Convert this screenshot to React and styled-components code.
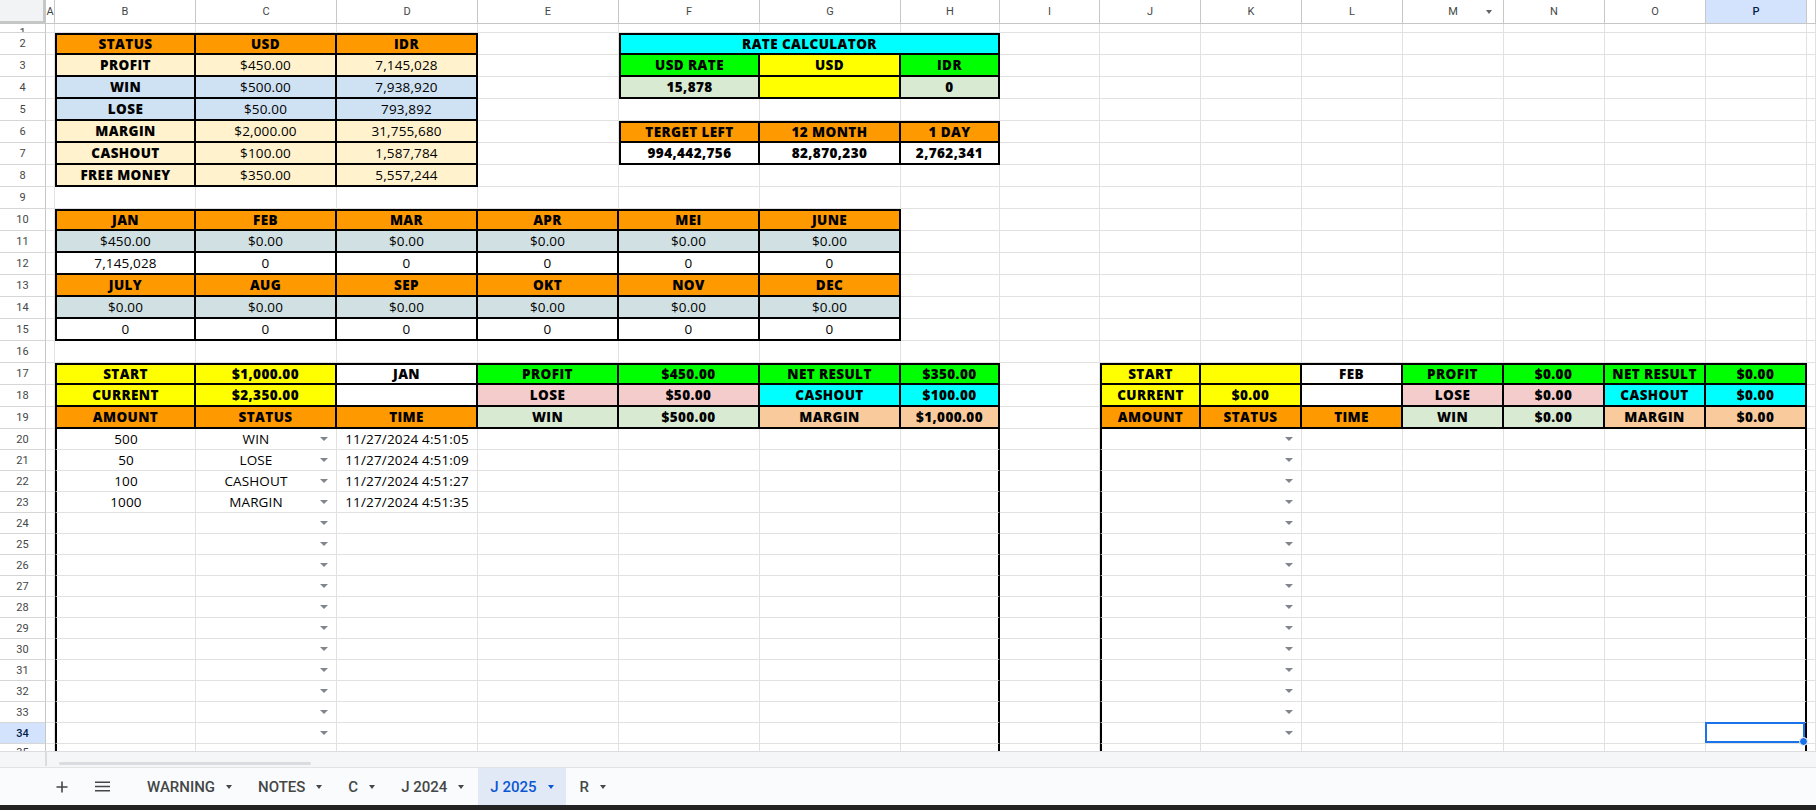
import React from 'react';
import styled, { createGlobalStyle } from 'styled-components';

const GlobalStyle = createGlobalStyle`
  html, body { margin: 0; padding: 0; background: #ffffff; overflow: hidden; }
  *, *::before, *::after { box-sizing: border-box; }
`;

const COLORS = {
  orange: '#ff9900',
  cream: '#fff2cc',
  blue: '#cfe2f3',
  cyan: '#00ffff',
  green: '#00ff00',
  yellow: '#ffff00',
  mint: '#d9ead3',
  slate: '#d0e0e3',
  pink: '#f4cccc',
  peach: '#f9cb9c',
  white: '#ffffff',
};

const COLS = ['A', 'B', 'C', 'D', 'E', 'F', 'G', 'H', 'I', 'J', 'K', 'L', 'M', 'N', 'O', 'P', 'Q'];
const ROWS = Array.from({ length: 35 }, (_, i) => i + 1);
const ci = (l) => COLS.indexOf(l);

/* ---------- sheet data ---------- */
const cells = {};
const put = (ref, v, bg, bold, extra = {}) => {
  cells[ref] = { v, bg, bold, ...extra };
};
const row = (r, startCol, values, bg, bold) => {
  values.forEach((v, i) => put(`${COLS[ci(startCol) + i]}${r}`, v, bg, bold));
};

// status table
row(2, 'B', ['STATUS', 'USD', 'IDR'], COLORS.orange, true);
put('B3', 'PROFIT', COLORS.cream, true); row(3, 'C', ['$450.00', '7,145,028'], COLORS.cream, false);
put('B4', 'WIN', COLORS.blue, true); row(4, 'C', ['$500.00', '7,938,920'], COLORS.blue, false);
put('B5', 'LOSE', COLORS.blue, true); row(5, 'C', ['$50.00', '793,892'], COLORS.blue, false);
put('B6', 'MARGIN', COLORS.cream, true); row(6, 'C', ['$2,000.00', '31,755,680'], COLORS.cream, false);
put('B7', 'CASHOUT', COLORS.cream, true); row(7, 'C', ['$100.00', '1,587,784'], COLORS.cream, false);
put('B8', 'FREE MONEY', COLORS.cream, true); row(8, 'C', ['$350.00', '5,557,244'], COLORS.cream, false);

// rate calculator
put('F2', 'RATE CALCULATOR', COLORS.cyan, true, { span: 3 });
put('F3', 'USD RATE', COLORS.green, true);
put('G3', 'USD', COLORS.yellow, true);
put('H3', 'IDR', COLORS.green, true);
put('F4', '15,878', COLORS.mint, true);
put('G4', '', COLORS.yellow, true);
put('H4', '0', COLORS.mint, true);
row(6, 'F', ['TERGET LEFT', '12 MONTH', '1 DAY'], COLORS.orange, true);
row(7, 'F', ['994,442,756', '82,870,230', '2,762,341'], COLORS.white, true);

// months
row(10, 'B', ['JAN', 'FEB', 'MAR', 'APR', 'MEI', 'JUNE'], COLORS.orange, true);
row(11, 'B', ['$450.00', '$0.00', '$0.00', '$0.00', '$0.00', '$0.00'], COLORS.slate, false);
row(12, 'B', ['7,145,028', '0', '0', '0', '0', '0'], COLORS.white, false);
row(13, 'B', ['JULY', 'AUG', 'SEP', 'OKT', 'NOV', 'DEC'], COLORS.orange, true);
row(14, 'B', ['$0.00', '$0.00', '$0.00', '$0.00', '$0.00', '$0.00'], COLORS.slate, false);
row(15, 'B', ['0', '0', '0', '0', '0', '0'], COLORS.white, false);

// journal JAN
row(17, 'B', ['START', '$1,000.00'], COLORS.yellow, true);
put('D17', 'JAN', COLORS.white, true);
row(17, 'E', ['PROFIT', '$450.00', 'NET RESULT', '$350.00'], COLORS.green, true);
row(18, 'B', ['CURRENT', '$2,350.00'], COLORS.yellow, true);
put('D18', '', COLORS.white, true);
row(18, 'E', ['LOSE', '$50.00'], COLORS.pink, true);
row(18, 'G', ['CASHOUT', '$100.00'], COLORS.cyan, true);
row(19, 'B', ['AMOUNT', 'STATUS', 'TIME'], COLORS.orange, true);
row(19, 'E', ['WIN', '$500.00'], COLORS.mint, true);
row(19, 'G', ['MARGIN', '$1,000.00'], COLORS.peach, true);

// journal FEB
row(17, 'J', ['START', ''], COLORS.yellow, true);
put('L17', 'FEB', COLORS.white, true);
row(17, 'M', ['PROFIT', '$0.00', 'NET RESULT', '$0.00'], COLORS.green, true);
row(18, 'J', ['CURRENT', '$0.00'], COLORS.yellow, true);
put('L18', '', COLORS.white, true);
row(18, 'M', ['LOSE', '$0.00'], COLORS.pink, true);
row(18, 'O', ['CASHOUT', '$0.00'], COLORS.cyan, true);
row(19, 'J', ['AMOUNT', 'STATUS', 'TIME'], COLORS.orange, true);
row(19, 'M', ['WIN', '$0.00'], COLORS.mint, true);
row(19, 'O', ['MARGIN', '$0.00'], COLORS.peach, true);

// journal entries
const entries = [
  ['500', 'WIN', '11/27/2024 4:51:05'],
  ['50', 'LOSE', '11/27/2024 4:51:09'],
  ['100', 'CASHOUT', '11/27/2024 4:51:27'],
  ['1000', 'MARGIN', '11/27/2024 4:51:35'],
];
for (let r = 20; r <= 35; r += 1) {
  const e = entries[r - 20];
  put(`B${r}`, e ? e[0] : '', null, false, { l: true });
  put(`C${r}`, e ? e[1] : '', null, false, { dd: true });
  put(`D${r}`, e ? e[2] : '', null, false);
  put(`H${r}`, '', null, false, { r: true });
  put(`J${r}`, '', null, false, { l: true });
  put(`K${r}`, '', null, false, { dd: true });
  put(`P${r}`, '', null, false, { r: true, selected: r === 34 });
}

// thick bordered blocks
const covered = new Set();
Object.entries(cells).forEach(([ref, c]) => {
  if (c.span > 1) {
    const col = ref.match(/[A-Z]+/)[0];
    const r = ref.match(/\d+/)[0];
    for (let k = 1; k < c.span; k += 1) covered.add(`${COLS[ci(col) + k]}${r}`);
  }
});
[['B', 2, 'D', 8], ['F', 2, 'H', 4], ['F', 6, 'H', 7], ['B', 10, 'G', 15], ['B', 17, 'H', 19], ['J', 17, 'P', 19]]
  .forEach(([c1, r1, c2, r2]) => {
    for (let r = r1; r <= r2; r += 1) {
      for (let c = ci(c1); c <= ci(c2); c += 1) {
        const ref = `${COLS[c]}${r}`;
        if (covered.has(ref)) continue;
        const cell = cells[ref] || (cells[ref] = { v: '' });
        cell.t = r === r1;
        cell.l = c === ci(c1);
        cell.r = true;
        cell.b = true;
      }
    }
  });

/* ---------- styled parts ---------- */
const Page = styled.div`
  width: 1816px;
  height: 810px;
  display: flex;
  flex-direction: column;
  overflow: hidden;
  background: #ffffff;
`;

const Sheet = styled.div`
  height: 751px;
  flex: none;
  overflow: hidden;
  display: grid;
  grid-template-columns: 46px 9px repeat(6, 141px) 99px 100px repeat(7, 101px) 1fr;
  grid-template-rows: 24px 9px repeat(18, 22px) repeat(16, 21px);
  align-content: start;
`;

const Corner = styled.div`
  background: #f1f3f4;
  border-right: 3px solid #c4c7c5;
  border-bottom: 3px solid #c4c7c5;
`;

const ColHeader = styled.div`
  display: grid;
  grid-template-columns: 1fr auto 1fr;
  align-items: center;
  background: ${(p) => (p.$active ? '#d3e3fd' : '#ffffff')};
  border-right: 1px solid #c7c7c7;
  border-bottom: 1px solid #c4c7c5;
  font-family: Roboto, 'Liberation Sans', sans-serif;
  font-size: 11px;
  font-weight: ${(p) => (p.$active ? 500 : 400)};
  color: ${(p) => (p.$active ? '#041e49' : '#444746')};
  overflow: hidden;
`;

const HeaderLetter = styled.span`
  grid-column: 2;
`;

const HeaderMenu = styled.span`
  grid-column: 3;
  justify-self: end;
  margin-right: 11px;
  width: 0;
  height: 0;
  border-left: 3.5px solid transparent;
  border-right: 3.5px solid transparent;
  border-top: 4px solid #5f6368;
`;

const RowHeader = styled.div`
  display: flex;
  justify-content: center;
  align-items: ${(p) => (p.$short ? 'flex-start' : 'center')};
  padding-top: ${(p) => (p.$short ? '3px' : '0')};
  line-height: 11px;
  overflow: hidden;
  background: ${(p) => (p.$active ? '#d3e3fd' : '#ffffff')};
  border-right: 1px solid #c4c7c5;
  border-bottom: 1px solid #d6d6d6;
  font-family: Roboto, 'Liberation Sans', sans-serif;
  font-size: 11px;
  font-weight: ${(p) => (p.$active ? 500 : 400)};
  color: ${(p) => (p.$active ? '#041e49' : '#444746')};
`;

const thick = '2px solid #000000';
const grid = '1px solid #e1e1e1';

const Cell = styled.div`
  grid-column: span ${(p) => p.$span || 1};
  position: relative;
  min-width: 0;
  display: flex;
  align-items: center;
  justify-content: center;
  background: ${(p) => p.$bg || '#ffffff'};
  border-top: ${(p) => (p.$t ? thick : '0')};
  border-left: ${(p) => (p.$l ? thick : '0')};
  border-right: ${(p) => (p.$r ? thick : grid)};
  border-bottom: ${(p) => (p.$b ? thick : grid)};
  font-family: 'Open Sans', 'DejaVu Sans', sans-serif;
  font-size: 13.5px;
  font-weight: ${(p) => (p.$bold ? 800 : 400)};
  letter-spacing: ${(p) => (p.$bold ? '0.4px' : '0.15px')};
  color: #000000;
  white-space: nowrap;
`;

const CellText = styled.span`
  flex: 1;
  text-align: center;
`;

const Caret = styled.span`
  flex: none;
  width: 0;
  height: 0;
  margin: 0 8px 0 4px;
  border-left: 4px solid transparent;
  border-right: 4px solid transparent;
  border-top: 4.5px solid #80868b;
`;

const SelectionBox = styled.div`
  position: absolute;
  top: -1px;
  left: -1px;
  right: 0;
  bottom: 0;
  border: 2px solid #1a73e8;
  z-index: 2;
`;

const FillHandle = styled.div`
  position: absolute;
  right: -5px;
  bottom: -5px;
  width: 9px;
  height: 9px;
  border-radius: 50%;
  background: #1a73e8;
  border: 1px solid #ffffff;
`;

const ScrollStrip = styled.div`
  height: 17px;
  flex: none;
  display: flex;
  align-items: stretch;
  padding-left: 45px;
  background: #f5f6f7;
  border-top: 1px solid #dadce0;
  border-bottom: 1px solid #e3e3e3;
`;

const StripDivider = styled.div`
  width: 2px;
  margin: 0 0 1px;
  background: #dadce0;
`;

const ScrollThumb = styled.div`
  width: 252px;
  height: 3px;
  margin: 10px 0 0 12px;
  border-radius: 2px;
  background: #dadce0;
`;

const TabBar = styled.div`
  height: 37px;
  flex: none;
  display: flex;
  align-items: stretch;
  padding-left: 48px;
  background: #f9fbfd;
  font-family: Roboto, 'Liberation Sans', sans-serif;
`;

const IconButton = styled.div`
  width: 28px;
  margin-left: ${(p) => (p.$gap ? '12px' : '0')};
  display: flex;
  align-items: center;
  justify-content: center;
  color: #444746;
`;

const Tabs = styled.div`
  display: flex;
  align-items: stretch;
  gap: 2px;
  margin-left: 19px;
`;

const Tab = styled.div`
  display: flex;
  align-items: center;
  padding: 0 12px;
  background: ${(p) => (p.$active ? '#e1e9f7' : 'transparent')};
  color: ${(p) => (p.$active ? '#0b57d0' : '#444746')};
  font-size: 15px;
  font-weight: 500;
  white-space: nowrap;
`;

const TabCaret = styled.span`
  width: 0;
  height: 0;
  margin-left: 11px;
  margin-top: 1px;
  border-left: 3.5px solid transparent;
  border-right: 3.5px solid transparent;
  border-top: 4px solid currentColor;
`;

const BottomBar = styled.div`
  flex: 1;
  background: #232323;
`;

/* ---------- components ---------- */
const SheetCell = ({ cell }) => (
  <Cell
    $span={cell.span}
    $bg={cell.bg}
    $bold={cell.bold}
    $t={cell.t}
    $l={cell.l}
    $r={cell.r}
    $b={cell.b}
  >
    {cell.dd ? (
      <>
        <CellText>{cell.v}</CellText>
        <Caret />
      </>
    ) : (
      cell.v
    )}
    {cell.selected && (
      <SelectionBox>
        <FillHandle />
      </SelectionBox>
    )}
  </Cell>
);

const PlusIcon = () => (
  <svg width="12" height="12" viewBox="0 0 12 12" fill="none" stroke="currentColor" strokeWidth="1.6">
    <path d="M6 0.5v11M0.5 6h11" />
  </svg>
);

const MenuIcon = () => (
  <svg width="15" height="11" viewBox="0 0 15 11" fill="none" stroke="currentColor" strokeWidth="1.4">
    <path d="M0 1.2h15M0 5.5h15M0 9.8h15" />
  </svg>
);

const TABS = ['WARNING', 'NOTES', 'C', 'J 2024', 'J 2025', 'R'];

export default function App() {
  return (
    <>
      <GlobalStyle />
      <Page>
        <Sheet>
          <Corner />
          {COLS.map((l) => (
            <ColHeader key={l} $active={l === 'P'}>
              <HeaderLetter>{l === 'Q' ? '' : l}</HeaderLetter>
              {l === 'M' && <HeaderMenu />}
            </ColHeader>
          ))}
          {ROWS.map((r) => (
            <React.Fragment key={r}>
              <RowHeader $active={r === 34} $short={r === 1 || r === 35}>
                {r}
              </RowHeader>
              {COLS.map((l) => {
                const ref = `${l}${r}`;
                if (covered.has(ref)) return null;
                return <SheetCell key={ref} cell={cells[ref] || { v: '' }} />;
              })}
            </React.Fragment>
          ))}
        </Sheet>
        <ScrollStrip>
          <StripDivider />
          <ScrollThumb />
        </ScrollStrip>
        <TabBar>
          <IconButton>
            <PlusIcon />
          </IconButton>
          <IconButton $gap>
            <MenuIcon />
          </IconButton>
          <Tabs>
            {TABS.map((t) => (
              <Tab key={t} $active={t === 'J 2025'}>
                {t}
                <TabCaret />
              </Tab>
            ))}
          </Tabs>
        </TabBar>
        <BottomBar />
      </Page>
    </>
  );
}
